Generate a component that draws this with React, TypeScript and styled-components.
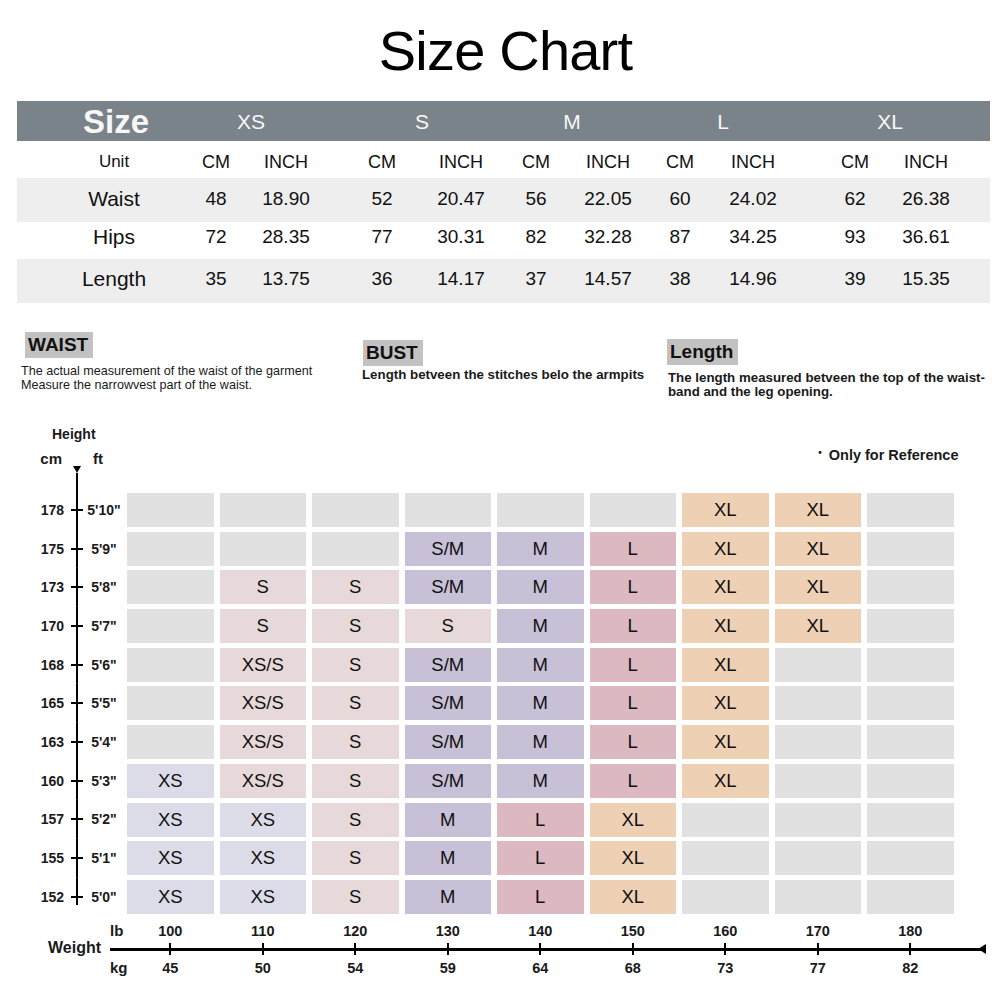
import React from 'react';
import styled, { createGlobalStyle } from 'styled-components';

const GlobalStyle = createGlobalStyle`
  html, body { margin: 0; padding: 0; background: #fff; }
  body { font-family: "Liberation Sans", Arial, sans-serif; color: #111; }
  * { box-sizing: border-box; }
`;

function tracks(centers: number[], w: number, total: number): string {
  const parts: string[] = [];
  let x = 0;
  centers.forEach((c) => {
    const s = c - w / 2;
    parts.push(`${s - x}px`, `${w}px`);
    x = s + w;
  });
  parts.push(`${Math.max(total - x, 0)}px`);
  return parts.join(' ');
}

const TABLE_LEFT = 17;
const HEAD_CENTERS = [116, 251, 422, 572, 723, 890].map((c) => c - TABLE_LEFT);
const BODY_CENTERS = [114, 216, 286, 382, 461, 536, 608, 680, 753, 855, 926].map((c) => c - TABLE_LEFT);
const HEAD_TRACKS = tracks(HEAD_CENTERS, 100, 973);
const BODY_TRACKS = tracks(BODY_CENTERS, 66, 973);

const Page = styled.div`
  width: 1000px;
  height: 1000px;
  overflow: hidden;
  background: #fff;
  display: flex;
  flex-direction: column;
`;

const Title = styled.h1`
  margin: 0;
  height: 101px;
  display: flex;
  align-items: center;
  justify-content: center;
  padding-left: 11px;
  font-size: 56px;
  font-weight: 400;
  color: #000;
  letter-spacing: -0.8px;
`;

const SizeTable = styled.div`
  margin-left: ${TABLE_LEFT}px;
  width: 973px;
`;

const Band = styled.div`
  height: 40px;
  background: #7b838a;
  display: grid;
  grid-template-columns: ${HEAD_TRACKS};
  align-items: center;
  color: #f7f7f7;
`;

const BandLabel = styled.div<{ $col: number; $big?: boolean }>`
  grid-column: ${(p) => p.$col};
  text-align: center;
  font-size: ${(p) => (p.$big ? '33px' : '21px')};
  font-weight: ${(p) => (p.$big ? 700 : 400)};
  line-height: 1;
  padding-top: ${(p) => (p.$big ? '0' : '1px')};
`;

const Row = styled.div<{ $h: number; $shade?: boolean; $shift: number }>`
  height: ${(p) => p.$h}px;
  background: ${(p) => (p.$shade ? '#eeeeee' : '#fff')};
  display: grid;
  grid-template-columns: ${BODY_TRACKS};
  align-items: center;
  padding-top: ${(p) => (p.$shift > 0 ? p.$shift * 2 : 0)}px;
  padding-bottom: ${(p) => (p.$shift < 0 ? -p.$shift * 2 : 0)}px;
`;

const Cell = styled.div<{ $col: number; $size: number }>`
  grid-column: ${(p) => p.$col};
  text-align: center;
  font-size: ${(p) => p.$size}px;
  line-height: 1;
  color: #111;
  white-space: nowrap;
`;

const Descriptions = styled.div`
  height: 123px;
  display: flex;
  padding-left: 21px;
`;

const DescBlock = styled.div<{ $w?: number; $top: number }>`
  ${(p) => (p.$w ? `width: ${p.$w}px;` : 'flex: 1;')}
  padding-top: ${(p) => p.$top}px;
  display: flex;
  flex-direction: column;
  align-items: flex-start;
`;

const DescHeading = styled.div<{ $ml: number }>`
  margin-left: ${(p) => p.$ml}px;
  background: #c2c2c2;
  font-size: 19px;
  font-weight: 700;
  line-height: 26px;
  height: 26px;
  padding: 0 5px 0 3px;
  color: #111;
`;

const DescText = styled.p<{ $bold?: boolean; $mt: number }>`
  margin: ${(p) => p.$mt}px 0 0;
  font-size: ${(p) => (p.$bold ? '13.3px' : '12.6px')};
  font-weight: ${(p) => (p.$bold ? 700 : 400)};
  line-height: 14px;
  color: #1a1a1a;
  white-space: nowrap;
`;

const Chart = styled.div`
  display: flex;
`;

const Axis = styled.div`
  width: 121px;
  margin-right: 6px;
  display: flex;
  flex-direction: column;
`;

const HeightLabel = styled.div`
  padding-left: 52px;
  font-size: 14px;
  font-weight: 700;
  line-height: 16px;
  color: #1a1a1a;
`;

const AxisGrid = styled.div<{ $h: number }>`
  display: grid;
  grid-template-columns: 71px 12px 38px;
  height: ${(p) => p.$h}px;
  align-items: center;
`;

const UnitsRow = styled(AxisGrid)`
  margin-top: 7px;
  align-items: start;
`;

const UnitText = styled.div<{ $align: 'left' | 'right'; $pad: number }>`
  text-align: ${(p) => p.$align};
  ${(p) => (p.$align === 'right' ? `padding-right: ${p.$pad}px;` : `padding-left: ${p.$pad}px;`)}
  font-size: 15px;
  font-weight: 700;
  line-height: 20px;
  color: #1a1a1a;
`;

const SpineStart = styled.div`
  height: 100%;
  display: flex;
  flex-direction: column;
  align-items: center;
  padding-top: 17px;
`;

const ArrowDown = styled.div`
  width: 0;
  height: 0;
  border-left: 4px solid transparent;
  border-right: 4px solid transparent;
  border-top: 7px solid #000;
`;

const SpineLine = styled.div`
  flex: 1;
  width: 2px;
  background: #000;
`;

const TickCell = styled.div<{ $last?: boolean }>`
  height: 100%;
  background:
    linear-gradient(#000, #000) center ${(p) => (p.$last ? 'top' : 'center')} / 2px ${(p) => (p.$last ? '27px' : '100%')} no-repeat,
    linear-gradient(#000, #000) center center / 12px 2px no-repeat;
`;

const AxisNum = styled.div<{ $align: 'right' | 'center' }>`
  text-align: ${(p) => p.$align};
  ${(p) => (p.$align === 'right' ? 'padding-right: 7px;' : 'padding-left: 4px;')}
  font-size: 14px;
  font-weight: 700;
  line-height: 1;
  color: #1a1a1a;
  white-space: nowrap;
`;

const CellsColumn = styled.div`
  display: flex;
  flex-direction: column;
`;

const Note = styled.div`
  align-self: flex-end;
  margin-right: -5px;
  padding-top: 21px;
  font-size: 14.5px;
  font-weight: 700;
  line-height: 17px;
  color: #1a1a1a;
  display: flex;
  align-items: flex-start;
`;

const Bullet = styled.span`
  font-size: 10px;
  line-height: 10px;
  margin-right: 7px;
  margin-top: 1px;
`;

const SizeGrid = styled.div`
  margin-top: 29px;
  display: grid;
  grid-template-columns: repeat(9, 86.5px);
  grid-template-rows: repeat(11, 34px);
  column-gap: 6px;
  row-gap: 4.7px;
`;

const COLORS: Record<string, string> = {
  '': '#e1e1e1',
  XS: '#dcdce9',
  'XS/S': '#e7d9d9',
  S: '#e7d9d9',
  'S/M': '#c7c0d7',
  M: '#c7c0d7',
  L: '#dcb8c0',
  XL: '#eed0b4',
};

const SizeCell = styled.div<{ $bg: string }>`
  background: ${(p) => p.$bg};
  display: flex;
  align-items: center;
  justify-content: center;
  font-size: 18.5px;
  color: #111;
`;

const WeightAxis = styled.div`
  margin-top: 7px;
  display: grid;
  grid-template-columns: 106px 18px repeat(9, 92.5px) 1fr;
  grid-template-rows: 16px 20px 18px;
`;

const WeightLabel = styled.div`
  grid-column: 1;
  grid-row: 1 / 4;
  align-self: center;
  text-align: right;
  padding-right: 5px;
  padding-bottom: 4px;
  font-size: 16px;
  font-weight: 700;
  color: #1a1a1a;
`;

const WUnit = styled.div<{ $row: number }>`
  grid-column: 2;
  grid-row: ${(p) => p.$row};
  padding-left: 4px;
  font-size: 15px;
  font-weight: 700;
  line-height: 16px;
  white-space: nowrap;
  align-self: center;
  color: #1a1a1a;
`;

const WNum = styled.div<{ $row: number; $col: number }>`
  grid-column: ${(p) => p.$col};
  grid-row: ${(p) => p.$row};
  text-align: center;
  align-self: center;
  font-size: 14.5px;
  font-weight: 700;
  line-height: 16px;
  color: #1a1a1a;
`;

const WLine = styled.div`
  grid-column: 2 / -1;
  grid-row: 2;
  margin-left: 4px;
  margin-right: 14px;
  display: grid;
  grid-template-columns: 14px repeat(9, 92.5px) 1fr;
  align-items: center;
  background: linear-gradient(#000, #000) left center / 100% 3px no-repeat;
`;

const WTick = styled.div<{ $col: number }>`
  grid-column: ${(p) => p.$col};
  justify-self: center;
  width: 2px;
  height: 12px;
  background: #000;
`;

const ArrowLeft = styled.div`
  grid-column: 11;
  justify-self: end;
  width: 0;
  height: 0;
  border-top: 5px solid transparent;
  border-bottom: 5px solid transparent;
  border-right: 8px solid #000;
`;

const heads = ['Size', 'XS', 'S', 'M', 'L', 'XL'];
const tableRows: { label: string; vals: string[]; h: number; shade: boolean; shift: number; lsize: number; vsize: number }[] = [
  { label: 'Unit', vals: ['CM', 'INCH', 'CM', 'INCH', 'CM', 'INCH', 'CM', 'INCH', 'CM', 'INCH'], h: 37, shade: false, shift: 2, lsize: 17, vsize: 18 },
  { label: 'Waist', vals: ['48', '18.90', '52', '20.47', '56', '22.05', '60', '24.02', '62', '26.38'], h: 44, shade: true, shift: -2, lsize: 21, vsize: 19 },
  { label: 'Hips', vals: ['72', '28.35', '77', '30.31', '82', '32.28', '87', '34.25', '93', '36.61'], h: 37, shade: false, shift: -4, lsize: 21, vsize: 19 },
  { label: 'Length', vals: ['35', '13.75', '36', '14.17', '37', '14.57', '38', '14.96', '39', '15.35'], h: 44, shade: true, shift: -3, lsize: 21, vsize: 19 },
];

const heights: [string, string][] = [
  ['178', `5'10"`], ['175', `5'9"`], ['173', `5'8"`], ['170', `5'7"`], ['168', `5'6"`], ['165', `5'5"`],
  ['163', `5'4"`], ['160', `5'3"`], ['157', `5'2"`], ['155', `5'1"`], ['152', `5'0"`],
];

const grid: string[][] = [
  ['', '', '', '', '', '', 'XL', 'XL', ''],
  ['', '', '', 'S/M', 'M', 'L', 'XL', 'XL', ''],
  ['', 'S', 'S', 'S/M', 'M', 'L', 'XL', 'XL', ''],
  ['', 'S', 'S', 'S', 'M', 'L', 'XL', 'XL', ''],
  ['', 'XS/S', 'S', 'S/M', 'M', 'L', 'XL', '', ''],
  ['', 'XS/S', 'S', 'S/M', 'M', 'L', 'XL', '', ''],
  ['', 'XS/S', 'S', 'S/M', 'M', 'L', 'XL', '', ''],
  ['XS', 'XS/S', 'S', 'S/M', 'M', 'L', 'XL', '', ''],
  ['XS', 'XS', 'S', 'M', 'L', 'XL', '', '', ''],
  ['XS', 'XS', 'S', 'M', 'L', 'XL', '', '', ''],
  ['XS', 'XS', 'S', 'M', 'L', 'XL', '', '', ''],
];

const lbs = ['100', '110', '120', '130', '140', '150', '160', '170', '180'];
const kgs = ['45', '50', '54', '59', '64', '68', '73', '77', '82'];

export default function App() {
  return (
    <Page>
      <GlobalStyle />
      <Title>Size Chart</Title>

      <SizeTable>
        <Band>
          {heads.map((h, i) => (
            <BandLabel key={h} $col={2 * i + 2} $big={i === 0}>
              {h}
            </BandLabel>
          ))}
        </Band>
        {tableRows.map((r) => (
          <Row key={r.label} $h={r.h} $shade={r.shade} $shift={r.shift}>
            <Cell $col={2} $size={r.lsize}>{r.label}</Cell>
            {r.vals.map((v, i) => (
              <Cell key={i} $col={2 * (i + 1) + 2} $size={r.vsize}>
                {v}
              </Cell>
            ))}
          </Row>
        ))}
      </SizeTable>

      <Descriptions>
        <DescBlock $w={341} $top={29}>
          <DescHeading $ml={4}>WAIST</DescHeading>
          <DescText $mt={6}>
            The actual measurement of the waist of the garment
            <br />
            Measure the narrowvest part of the waist.
          </DescText>
        </DescBlock>
        <DescBlock $w={306} $top={37}>
          <DescHeading $ml={1}>BUST</DescHeading>
          <DescText $bold $mt={2}>Length betveen the stitches belo the armpits</DescText>
        </DescBlock>
        <DescBlock $top={36}>
          <DescHeading $ml={-1}>Length</DescHeading>
          <DescText $bold $mt={6}>
            The length measured betveen the top of the waist-
            <br />
            band and the leg opening.
          </DescText>
        </DescBlock>
      </Descriptions>

      <Chart>
        <Axis>
          <HeightLabel>Height</HeightLabel>
          <UnitsRow $h={41.65}>
            <UnitText $align="right" $pad={9}>cm</UnitText>
            <SpineStart>
              <ArrowDown />
              <SpineLine />
            </SpineStart>
            <UnitText $align="left" $pad={10}>ft</UnitText>
          </UnitsRow>
          {heights.map(([cm, ft], i) => (
            <AxisGrid key={cm} $h={38.7}>
              <AxisNum $align="right">{cm}</AxisNum>
              <TickCell $last={i === heights.length - 1} />
              <AxisNum $align="center">{ft}</AxisNum>
            </AxisGrid>
          ))}
        </Axis>
        <CellsColumn>
          <Note>
            <Bullet>•</Bullet>Only for Reference
          </Note>
          <SizeGrid>
            {grid.flatMap((row, r) =>
              row.map((s, c) => (
                <SizeCell key={`${r}-${c}`} $bg={COLORS[s]}>
                  {s}
                </SizeCell>
              ))
            )}
          </SizeGrid>
        </CellsColumn>
      </Chart>

      <WeightAxis>
        <WeightLabel>Weight</WeightLabel>
        <WUnit $row={1}>lb</WUnit>
        <WUnit $row={3}>kg</WUnit>
        {lbs.map((l, i) => (
          <WNum key={l} $row={1} $col={i + 3}>{l}</WNum>
        ))}
        <WLine>
          {lbs.map((l, i) => (
            <WTick key={l} $col={i + 2} />
          ))}
          <ArrowLeft />
        </WLine>
        {kgs.map((k, i) => (
          <WNum key={k} $row={3} $col={i + 3}>{k}</WNum>
        ))}
      </WeightAxis>
    </Page>
  );
}
